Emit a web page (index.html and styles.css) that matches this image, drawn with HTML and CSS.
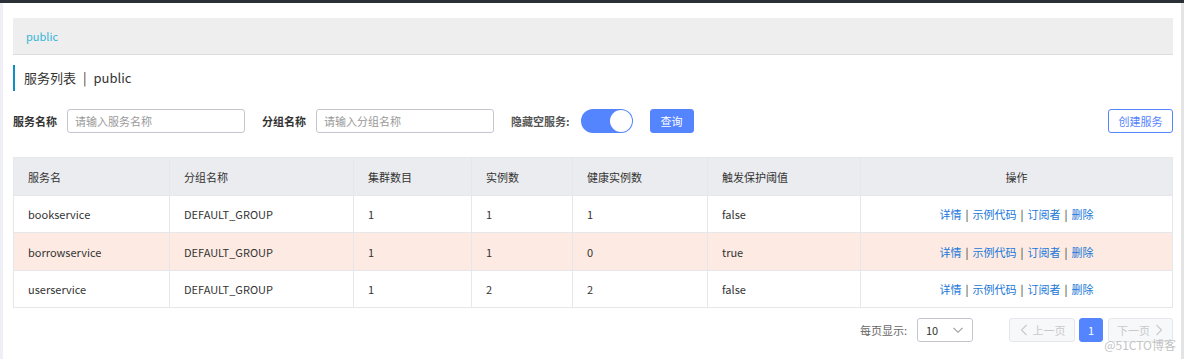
FILE: index.html
```html
<!DOCTYPE html>
<html lang="zh-CN">
	<head>
		<meta charset="UTF-8" />
		<meta name="viewport" content="width=device-width, initial-scale=1.0" />
		<title>服务列表</title>

		<link rel="stylesheet" href="styles.css">
	</head>
	<body>
		<div class="topbar"></div>
		<div class="layout">
			<div class="side"></div>
			<main class="main">
				<div class="crumb">
					<span class="crumb_ns">public</span>
				</div>

				<h3 class="page_title">服务列表<span class="title_sep">|</span>public</h3>

				<div class="search">
					<label class="search_label">服务名称</label>
					<input class="search_input" type="text" placeholder="请输入服务名称" />
					<label class="search_label">分组名称</label>
					<input class="search_input" type="text" placeholder="请输入分组名称" />
					<label class="search_label normal">隐藏空服务:</label>
					<span class="switch"><span class="switch_knob"></span></span>
					<button class="btn primary">查询</button>
					<button class="btn outline create">创建服务</button>
				</div>

				<table class="list">
					<colgroup>
						<col style="width: 156px" />
						<col style="width: 184px" />
						<col style="width: 118px" />
						<col style="width: 101px" />
						<col style="width: 135px" />
						<col style="width: 153px" />
						<col />
					</colgroup>
					<thead>
						<tr>
							<th>服务名</th>
							<th>分组名称</th>
							<th>集群数目</th>
							<th>实例数</th>
							<th>健康实例数</th>
							<th>触发保护阈值</th>
							<th class="center">操作</th>
						</tr>
					</thead>
					<tbody>
						<tr>
							<td>bookservice</td>
							<td>DEFAULT_GROUP</td>
							<td>1</td>
							<td>1</td>
							<td>1</td>
							<td>false</td>
							<td class="center ops">
								<a href="#">详情</a><span class="sep">|</span><a href="#">示例代码</a><span class="sep">|</span><a href="#">订阅者</a><span class="sep">|</span><a href="#">删除</a>
							</td>
						</tr>
						<tr class="warn">
							<td>borrowservice</td>
							<td>DEFAULT_GROUP</td>
							<td>1</td>
							<td>1</td>
							<td>0</td>
							<td>true</td>
							<td class="center ops">
								<a href="#">详情</a><span class="sep">|</span><a href="#">示例代码</a><span class="sep">|</span><a href="#">订阅者</a><span class="sep">|</span><a href="#">删除</a>
							</td>
						</tr>
						<tr>
							<td>userservice</td>
							<td>DEFAULT_GROUP</td>
							<td>1</td>
							<td>2</td>
							<td>2</td>
							<td>false</td>
							<td class="center ops">
								<a href="#">详情</a><span class="sep">|</span><a href="#">示例代码</a><span class="sep">|</span><a href="#">订阅者</a><span class="sep">|</span><a href="#">删除</a>
							</td>
						</tr>
					</tbody>
				</table>

				<div class="pager">
					<span class="pager_label">每页显示:</span>
					<div class="select">
						<span>10</span>
						<svg width="12" height="12" viewBox="0 0 12 12"><path d="M1.5 3.8 L6 8.3 L10.5 3.8" fill="none" stroke="#999" stroke-width="1.1" /></svg>
					</div>
					<button class="page_btn prev" disabled>
						<svg width="10" height="12" viewBox="0 0 10 12"><path d="M7.5 1 L2.5 6 L7.5 11" fill="none" stroke="#c8c9cc" stroke-width="1.1" /></svg>
						上一页
					</button>
					<button class="page_btn current">1</button>
					<button class="page_btn next" disabled>
						下一页
						<svg width="10" height="12" viewBox="0 0 10 12"><path d="M2.5 1 L7.5 6 L2.5 11" fill="none" stroke="#c8c9cc" stroke-width="1.1" /></svg>
					</button>
				</div>

				<span class="watermark">@51CTO博客</span>
			</main>
			<div class="scrollbar"></div>
		</div>
	</body>
</html>
```

FILE: styles.css
```css
* {
	padding: 0;
	margin: 0;
	box-sizing: border-box;
}
a {
	text-decoration: none;
}
body {
	font-family: "Noto Sans CJK SC", "Noto Sans", sans-serif;
	font-size: 11px;
	color: #333;
	background: #fff;
	height: 359px;
	overflow: hidden;
}

.topbar {
	height: 3px;
	background-color: #2b2f36;
}

.layout {
	display: flex;
	height: 356px;
}
.side {
	width: 3px;
	background-color: #eef0f5;
}
.scrollbar {
	width: 3px;
	background-color: #e4e4e4;
}

.main {
	position: relative;
	flex: 1;
	padding: 15px 8px 0 10px;
}

.crumb {
	display: flex;
	align-items: center;
	height: 37px;
	padding-left: 13px;
	background-color: #eeeeee;
	border-bottom: 1px solid #dddddd;
}
.crumb_ns {
	color: #33b5d8;
	font-size: 11px;
}

.page_title {
	margin-top: 10px;
	height: 26px;
	padding-left: 9px;
	border-left: 2px solid #0e8fc5;
	font-size: 13px;
	font-weight: normal;
	line-height: 26px;
	color: #333;
}
.title_sep {
	margin: 0 7px;
}

.search {
	display: flex;
	align-items: center;
	margin-top: 18px;
	height: 24px;
}
.search_label {
	font-size: 11px;
	font-weight: bold;
	color: #333;
	margin-right: 10px;
}
.search_label.normal {
	color: #555;
	margin-right: 11px;
}
.search_input {
	width: 178px;
	height: 24px;
	margin-right: 17px;
	padding: 0 7px;
	border: 1px solid #c4c6cf;
	border-radius: 3px;
	font-family: inherit;
	font-size: 11px;
	color: #333;
	outline: none;
}
.search_input::placeholder {
	color: #999;
}

.switch {
	position: relative;
	display: inline-block;
	width: 52px;
	height: 24px;
	margin-right: 17px;
	border-radius: 12px;
	background-color: #5584ff;
}
.switch_knob {
	position: absolute;
	top: 1px;
	right: 1px;
	width: 22px;
	height: 22px;
	border-radius: 50%;
	background-color: #fff;
}

.btn {
	height: 24px;
	padding: 0;
	border-radius: 3px;
	font-family: inherit;
	font-size: 11px;
	white-space: nowrap;
	cursor: pointer;
}
.btn.primary {
	width: 44px;
	border: 1px solid #5584ff;
	background-color: #5584ff;
	color: #fff;
}
.btn.outline {
	border: 1px solid #5584ff;
	background-color: #fff;
	color: #5584ff;
}
.create {
	margin-left: auto;
	width: 65px;
}

.list {
	margin-top: 24px;
	width: 100%;
	table-layout: fixed;
	border-collapse: collapse;
	border: 1px solid #e6e7eb;
}
.list th,
.list td {
	padding: 0 14px;
	border: 1px solid #e6e7eb;
	text-align: left;
	font-size: 11px;
	font-weight: normal;
	color: #333;
	white-space: nowrap;
}
.list th {
	height: 38px;
	background-color: #ebecf0;
}
.list td {
	height: 37px;
}
.list tr:nth-child(2) td {
	height: 38px;
}
.list .center {
	text-align: center;
}
.list .warn td {
	background-color: #fdebe3;
}
.ops a {
	color: #2077d8;
}
.ops .sep {
	margin: 0 4px;
	color: #333;
}

.pager {
	display: flex;
	align-items: center;
	justify-content: flex-end;
	margin-top: 10px;
	height: 24px;
}
.pager_label {
	color: #666;
	margin-right: 10px;
}
.select {
	display: flex;
	align-items: center;
	justify-content: space-between;
	width: 56px;
	height: 24px;
	margin-right: 36px;
	padding: 0 8px 0 8px;
	border: 1px solid #c4c6cf;
	border-radius: 3px;
	color: #333;
}
.page_btn {
	display: flex;
	align-items: center;
	justify-content: center;
	gap: 4px;
	height: 24px;
	border: 1px solid #e6e7eb;
	border-radius: 3px;
	background-color: #f7f8fa;
	color: #c8c9cc;
	font-family: inherit;
	font-size: 11px;
}
.page_btn.prev {
	width: 66px;
}
.page_btn.next {
	width: 65px;
}
.page_btn.current {
	width: 24px;
	margin: 0 5px 0 4px;
	border-color: #5584ff;
	background-color: #5584ff;
	color: #fff;
}

.watermark {
	position: absolute;
	right: 5px;
	top: 333px;
	font-size: 12px;
	color: #c4c4c4;
	pointer-events: none;
}
```
